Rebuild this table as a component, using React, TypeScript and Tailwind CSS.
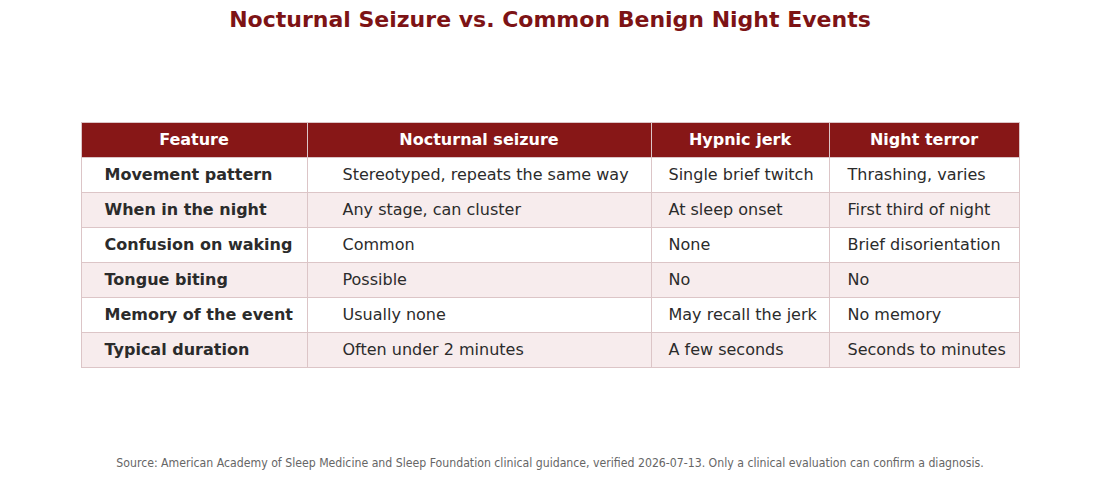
import React from "react";

const rows = [
  ["Movement pattern", "Stereotyped, repeats the same way", "Single brief twitch", "Thrashing, varies"],
  ["When in the night", "Any stage, can cluster", "At sleep onset", "First third of night"],
  ["Confusion on waking", "Common", "None", "Brief disorientation"],
  ["Tongue biting", "Possible", "No", "No"],
  ["Memory of the event", "Usually none", "May recall the jerk", "No memory"],
  ["Typical duration", "Often under 2 minutes", "A few seconds", "Seconds to minutes"],
];

export default function App() {
  return (
    <div className="w-[1100px] h-[479px] bg-white flex flex-col items-center" style={{ fontFamily: '"DejaVu Sans", sans-serif' }}>
      <h1 className="mt-[6px] text-[22px] leading-[28px] font-bold text-[#7d1315]">
        Nocturnal Seizure vs. Common Benign Night Events
      </h1>
      <table className="mt-[88px] w-[938px] border-collapse text-[16px] text-[#2b2b2b] table-fixed">
        <colgroup>
          <col className="w-[226px]" />
          <col className="w-[344px]" />
          <col className="w-[178px]" />
          <col className="w-[190px]" />
        </colgroup>
        <thead>
          <tr className="bg-[#871717] text-white h-[35px]">
            {["Feature", "Nocturnal seizure", "Hypnic jerk", "Night terror"].map((h) => (
              <th key={h} className="border border-[#dcc5c7] font-bold text-center p-0">{h}</th>
            ))}
          </tr>
        </thead>
        <tbody>
          {rows.map((r, i) => (
            <tr key={i} className={i % 2 === 1 ? "bg-[#f7eced] h-[35px]" : "bg-white h-[35px]"}>
              <td className="border border-[#dcc5c7] font-bold pl-[23px] p-0 whitespace-nowrap">{r[0]}</td>
              <td className="border border-[#dcc5c7] pl-[35px] p-0 whitespace-nowrap">{r[1]}</td>
              <td className="border border-[#dcc5c7] pl-[17px] p-0 whitespace-nowrap">{r[2]}</td>
              <td className="border border-[#dcc5c7] pl-[18px] p-0 whitespace-nowrap">{r[3]}</td>
            </tr>
          ))}
        </tbody>
      </table>
      <p className="mt-auto mb-[9px] text-[12.2px] leading-[14px] text-[#666666]" style={{ fontFamily: '"DejaVu Sans Condensed", "DejaVu Sans", sans-serif', fontStretch: "condensed" }}>
        Source: American Academy of Sleep Medicine and Sleep Foundation clinical guidance, verified 2026-07-13. Only a clinical evaluation can confirm a diagnosis.
      </p>
    </div>
  );
}
